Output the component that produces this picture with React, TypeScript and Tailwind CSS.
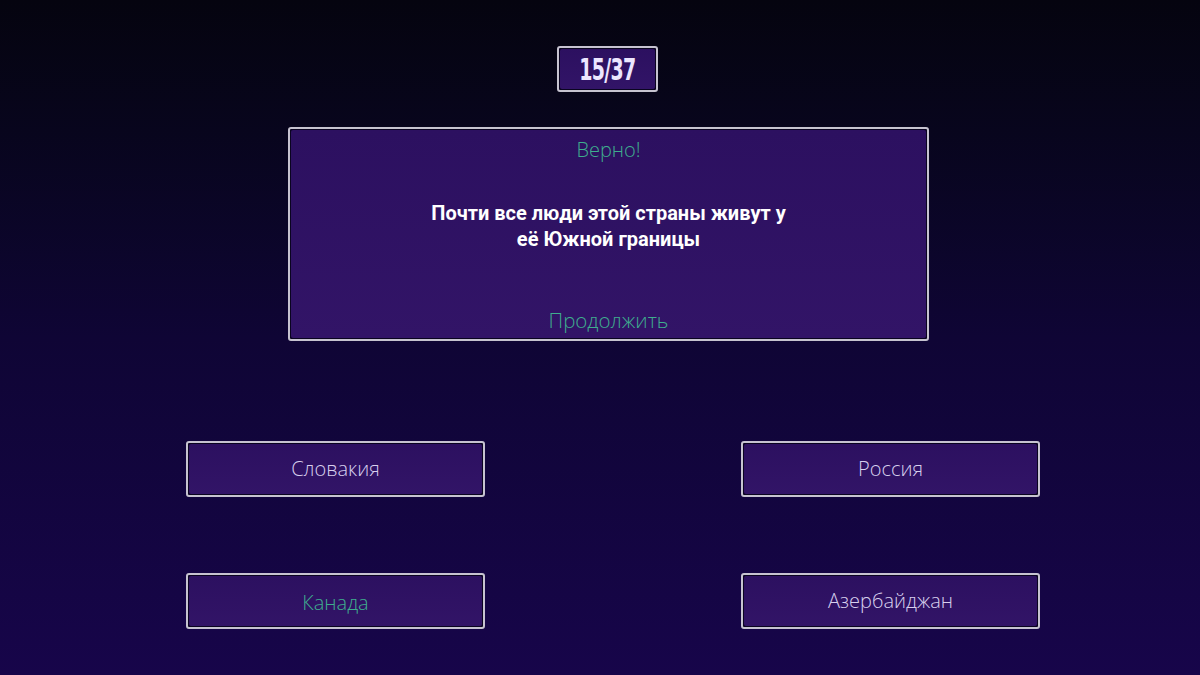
import React from 'react'

const answers = [
  { label: 'Словакия', correct: false },
  { label: 'Россия', correct: false },
  { label: 'Канада', correct: true },
  { label: 'Азербайджан', correct: false },
]

function Frame({ className = '', children }: { className?: string; children?: React.ReactNode }) {
  return (
    <div className={`rounded-[3px] border-2 border-[#c6c3d0] bg-[#0a0420] p-px ${className}`}>
      <div className="h-full w-full rounded-[2px] bg-gradient-to-b from-[#2c1060] to-[#321467]">{children}</div>
    </div>
  )
}

export default function App() {
  return (
    <div
      className="flex h-[675px] w-[1200px] flex-col overflow-hidden bg-gradient-to-b from-[#05040f] via-[#0f0535] to-[#17054a]"
      style={{ fontFamily: '"Open Sans", "Noto Sans", sans-serif' }}
    >
      {/* question counter */}
      <Frame className="ml-[557px] mt-[46px] h-[46px] w-[101px]">
        <div className="flex h-full items-center justify-center">
          <span
            className="inline-block scale-x-[0.68] text-[31px] font-bold leading-none tracking-[-1px] text-[#ece6ff]"
            style={{ fontFamily: '"DejaVu Sans Condensed", "DejaVu Sans", sans-serif' }}
          >
            15/37
          </span>
        </div>
      </Frame>

      {/* question card */}
      <Frame className="ml-[288px] mt-[35px] h-[214px] w-[641px]">
        <div className="flex h-full flex-col items-center">
          <div className="mt-[5px] text-[20px] font-light text-[#3fae8e]">Верно!</div>
          <div
            className="mt-[35px] text-center text-[20px] font-bold leading-[26px] text-white"
            style={{ fontFamily: 'Roboto, "Noto Sans", sans-serif' }}
          >
            Почти все люди этой страны живут у
            <br />
            её Южной границы
          </div>
          <div className="mt-auto mb-[2px] text-[20.5px] font-light text-[#3fae8e]">Продолжить</div>
        </div>
      </Frame>

      {/* answers */}
      <div className="ml-[186px] mt-[100px] grid w-[854px] grid-cols-[299px_299px] justify-between gap-y-[76px]">
        {answers.map(a => (
          <Frame key={a.label} className="h-[56px]">
            <div
              className={`flex h-full items-center justify-center text-[20px] font-light ${
                a.correct ? 'pt-[4px] text-[#3fae8e]' : 'text-[#d8d0ee]'
              }`}
            >
              {a.label}
            </div>
          </Frame>
        ))}
      </div>
    </div>
  )
}
